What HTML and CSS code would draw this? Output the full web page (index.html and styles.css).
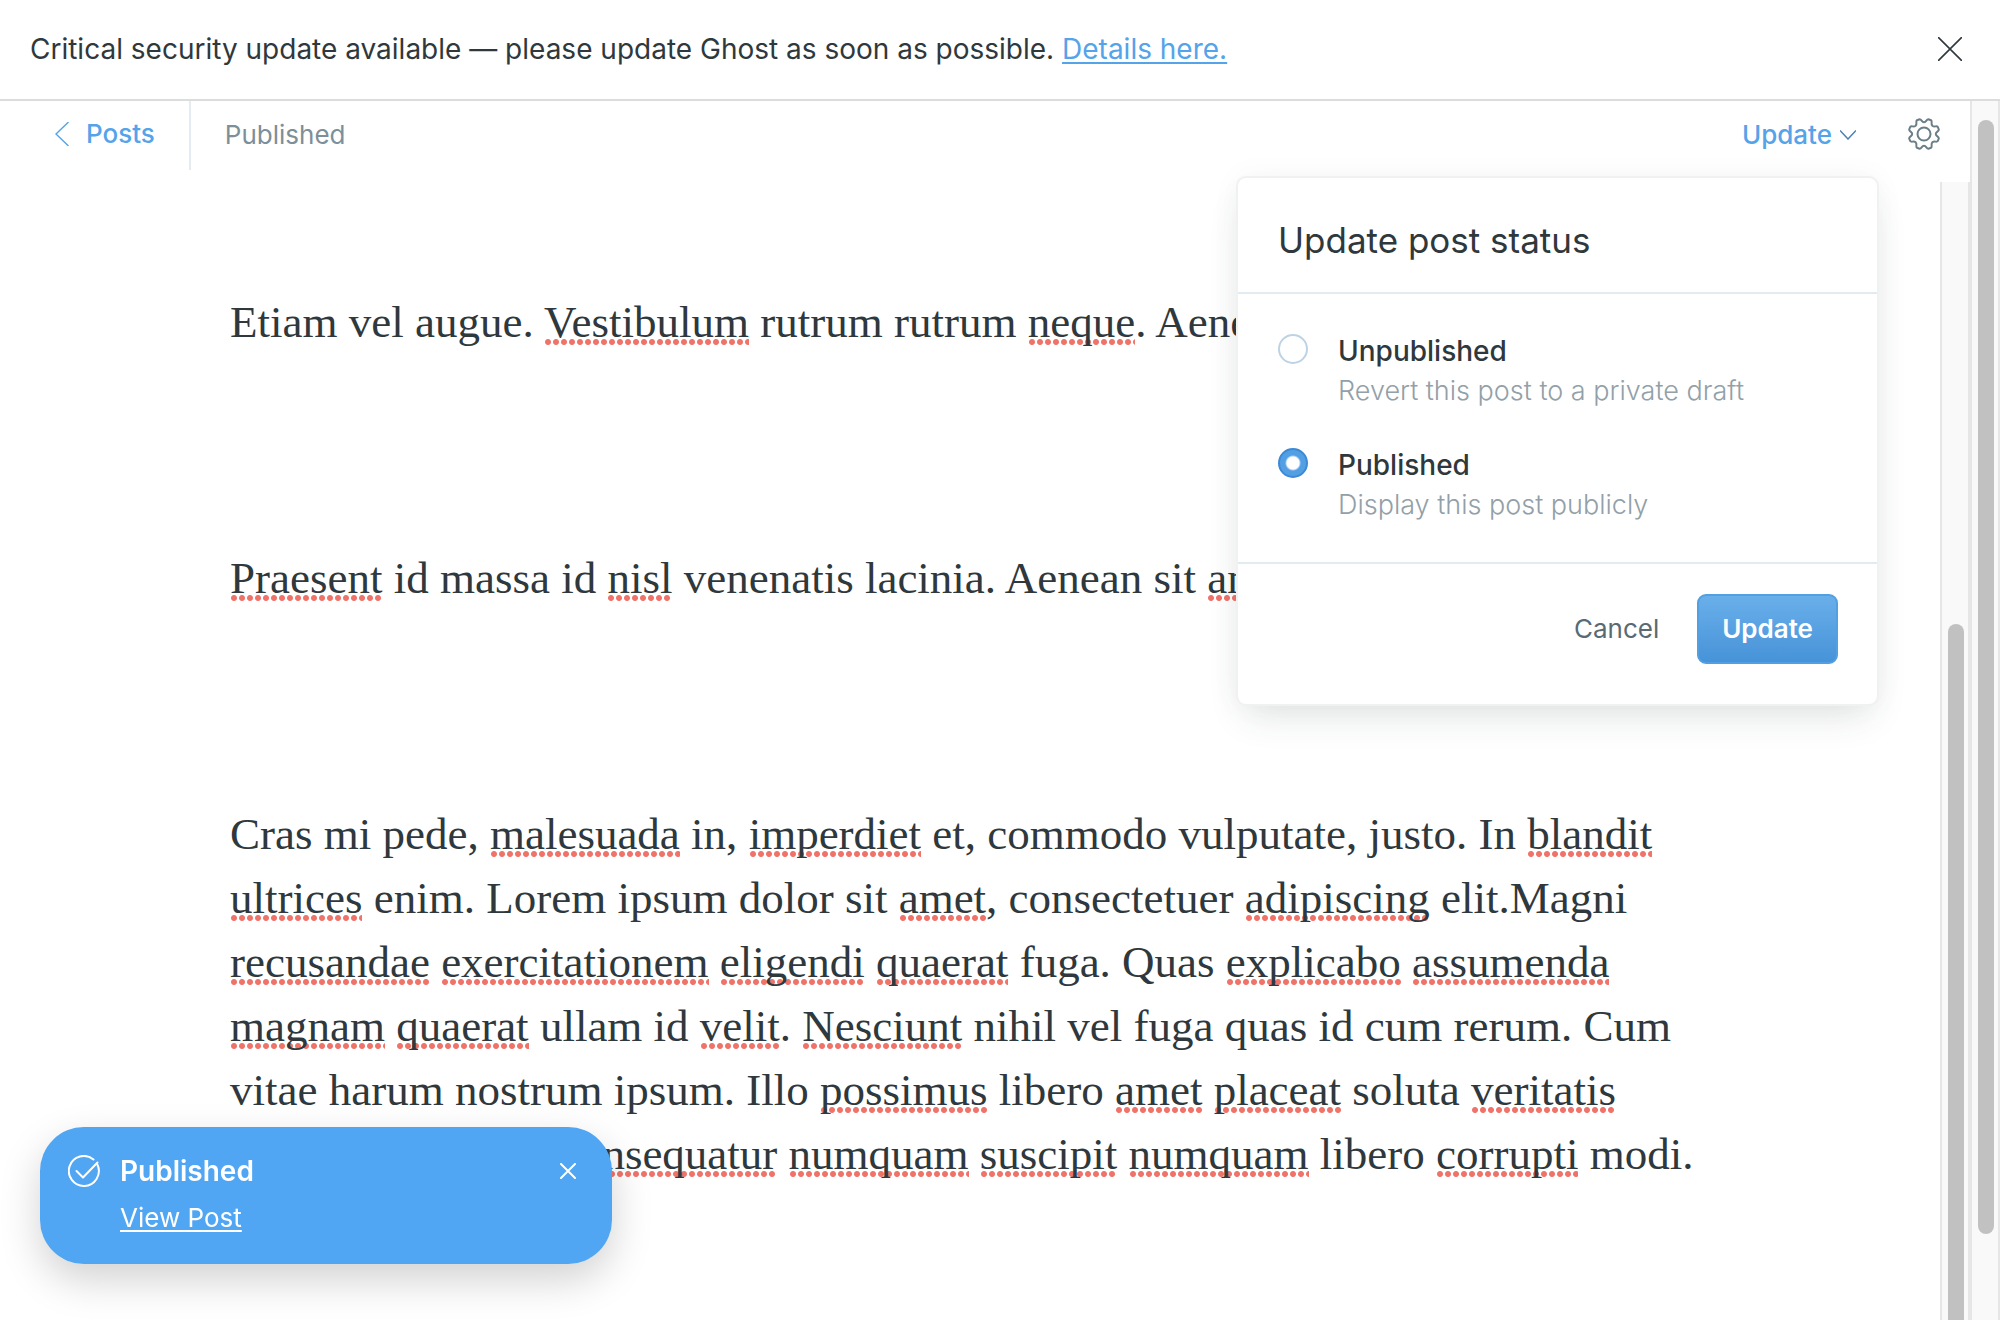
FILE: index.html
```html
<!DOCTYPE html>
<html lang="en">
<head>
<meta charset="utf-8">
<title>Editor</title>
<link rel="stylesheet" href="styles.css">
</head>
<body>
<div class="app">
  <aside class="alert">
    <p class="alert-text">Critical security update available — please update Ghost as soon as possible. <a href="#">Details here.</a></p>
    <button class="icon-button" type="button" aria-label="Dismiss">
      <svg width="24" height="24" viewBox="0 0 24 24" fill="none" stroke="currentColor" stroke-width="1.6"><path d="M0 0 24 24M24 0 0 24"/></svg>
    </button>
  </aside>
  <div class="viewport">
    <div class="editor">
      <header class="toolbar">
        <a class="back" href="#">
          <svg width="14" height="24" viewBox="0 0 14 24" fill="none" stroke="currentColor" stroke-width="1.4"><path d="M13.500 0 1 12 13.500 24"/></svg>
          Posts
        </a>
        <span class="status">Published</span>
        <button class="update-trigger" type="button" aria-expanded="true">
          Update
          <svg width="16" height="10" viewBox="0 0 16 10" fill="none" stroke="currentColor" stroke-width="1.5"><path d="M0 0.500 8 9 16 0.500"/></svg>
        </button>
        <button class="icon-button settings" type="button" aria-label="Settings">
          <svg width="32" height="32" viewBox="0 0 32 32" fill="none" stroke="currentColor" stroke-width="2"><circle cx="16" cy="16" r="6.500"/><path d="M16 4.200C18.500 4.200 18.300 1 20.500 1.200L23 2.200C24.700 3.300 22.500 5.500 24.300 7.700C26.500 9.500 28.700 7.300 29.800 9L30.800 11.500C31 13.700 27.800 13.500 27.800 16C27.800 18.500 31 18.300 30.800 20.500L29.800 23C28.700 24.700 26.500 22.500 24.300 24.300C22.500 26.500 24.700 28.700 23 29.800L20.500 30.800C18.300 31 18.500 27.800 16 27.800C13.500 27.800 13.700 31 11.500 30.800L9 29.800C7.300 28.700 9.500 26.500 7.700 24.300C5.500 22.500 3.300 24.700 2.200 23L1.200 20.500C1 18.300 4.200 18.500 4.200 16C4.200 13.500 1 13.700 1.200 11.500L2.200 9C3.300 7.300 5.500 9.500 7.700 7.700C9.500 5.500 7.300 3.300 9 2.200L11.500 1.200C13.700 1 13.500 4.200 16 4.200Z"/></svg>
        </button>
        <form class="popover">
          <h2 class="popover-title">Update post status</h2>
          <div class="options">
            <div class="option">
              <input type="radio" id="unpublished" name="status">
              <label for="unpublished">Unpublished<small>Revert this post to a private draft</small></label>
            </div>
            <div class="option">
              <input type="radio" id="published" name="status" checked>
              <label for="published">Published<small>Display this post publicly</small></label>
            </div>
          </div>
          <footer class="actions">
            <button class="cancel" type="button">Cancel</button>
            <button class="submit" type="button">Update</button>
          </footer>
        </form>
      </header>
      <div class="content">
        <article class="post">
          <p>Etiam vel augue. <u>Vestibulum</u> rutrum rutrum <u>neque</u>. Aenean</p>
          <p><u>Praesent</u> id massa id <u>nisl</u> venenatis lacinia. Aenean sit <u>amet</u></p>
          <p>Cras mi pede, <u>malesuada</u> in, <u>imperdiet</u> et, commodo vulputate, justo. In <u>blandit</u><br>
          <u>ultrices</u> enim. Lorem ipsum dolor sit <u>amet</u>, consectetuer <u>adipiscing</u> elit.Magni<br>
          <u>recusandae</u> <u>exercitationem</u> <u>eligendi</u> <u>quaerat</u> fuga. Quas <u>explicabo</u> <u>assumenda</u><br>
          <u>magnam</u> <u>quaerat</u> ullam id <u>velit</u>. <u>Nesciunt</u> nihil vel fuga quas id cum rerum. Cum<br>
          vitae harum nostrum ipsum. Illo <u>possimus</u> libero <u>amet</u> <u>placeat</u> soluta <u>veritatis</u><br>
          accusantium quas <u>consequatur</u> <u>numquam</u> <u>suscipit</u> <u>numquam</u> libero <u>corrupti</u> modi.</p>
        </article>
        <div class="scrollbar"><div class="thumb thumb-content"></div></div>
      </div>
    </div>
    <div class="scrollbar"><div class="thumb thumb-page"></div></div>
  </div>
  <section class="toast" role="status">
    <svg width="32" height="32" viewBox="0 0 32 32" fill="none" stroke="currentColor" stroke-width="2" stroke-linecap="round" stroke-linejoin="round"><path d="M25.500 4.500A15 15 0 1 0 29.600 10"/><path d="M8.500 16 15 22.500 29.500 7.500"/></svg>
    <div class="toast-body"><strong>Published</strong><a href="#">View Post</a></div>
    <button class="icon-button" type="button" aria-label="Close">
      <svg width="16" height="16" viewBox="0 0 16 16" fill="none" stroke="currentColor" stroke-width="2" stroke-linecap="round"><path d="M1 1 15 15M15 1 1 15"/></svg>
    </button>
  </section>
</div>
</body>
</html>
```
FILE: styles.css
```css
* { box-sizing: border-box; }
body {
  margin: 0;
  background: #fff;
  color: #2f383c;
  font: 400 26px/32px Inter, "Liberation Sans", sans-serif;
}
button { padding: 0; border: 0; background: none; color: inherit; font: inherit; }
h2, p { margin: 0; }
svg { display: block; flex: none; }

.app { display: flex; flex-direction: column; height: 100vh; overflow: hidden; }

.alert {
  display: flex;
  align-items: center;
  justify-content: space-between;
  padding: 31px 38px 32px 30px;
  border-bottom: 2px solid #dbdddd;
  font-size: 28px;
  line-height: 36px;
}
.alert a { color: #55a3e9; text-decoration-thickness: 2px; text-underline-offset: 3px; text-decoration-skip-ink: none; }

.viewport { display: flex; flex: 1; min-height: 0; }
.editor { display: flex; flex: 1; flex-direction: column; min-width: 0; }

.toolbar { position: relative; display: flex; align-items: flex-start; padding-right: 30px; height: 81px; }
.back {
  display: flex;
  align-items: center;
  gap: 17px;
  padding: 17px 34px 20px 55px;
  border-right: 2px solid #e5ecf1;
  color: #55a3e9;
  font-weight: 500;
  text-decoration: none;
}
.status { flex: 1; padding: 18px 34px; color: #7d8f99; }
.update-trigger { display: flex; align-items: center; gap: 8px; padding: 18px 0; color: #55a3e9; font-weight: 500; }
.update-trigger svg { color: #4b80b1; }
.settings { margin: 17px 0 0 52px; color: #6a7e88; }

.popover {
  position: absolute;
  z-index: 2;
  top: 75px;
  right: 91px;
  width: 643px;
  border: 2px solid #f0f1f1;
  border-radius: 10px;
  background: #fff;
  box-shadow: 0 18px 36px -10px rgba(40, 60, 60, .14), 0 0 30px rgba(40, 60, 60, .04);
}
.popover-title { padding: 41px 40px 31px; border-bottom: 2px solid #e2ebf2; font-size: 35px; font-weight: 400; line-height: 42px; }
.options { display: grid; gap: 34px; padding: 37px 40px; }
.option { display: flex; gap: 30px; }
.option input {
  appearance: none;
  flex: none;
  width: 30px;
  height: 30px;
  margin: 3px 0 0;
  border: 2px solid #bdd3e5;
  border-radius: 50%;
  background: #fff;
}
.option input:checked { border-color: #3d89d6; background: radial-gradient(circle, #fff 6px, #529fe3 8px); }
.option label { font-size: 28px; font-weight: 500; line-height: 40px; }
.option small { display: block; color: #92a0a8; font-size: 27px; font-weight: 300; line-height: 40px; }
.actions { display: flex; align-items: center; justify-content: flex-end; gap: 38px; padding: 30px 39px 40px; border-top: 2px solid #e2ebf2; }
.cancel { color: #5a6a73; }
.submit {
  padding: 17px 23px;
  border: 2px solid #529fe3;
  border-radius: 9px;
  background: linear-gradient(#69afea, #4793d8);
  color: #fff;
  font-weight: 600;
}

.content { display: flex; flex: 1; min-height: 0; }
.post {
  display: flex;
  flex: 1;
  flex-direction: column;
  gap: 192px;
  min-width: 0;
  padding: 108px 0 0 230px;
  font: 45px/64px "Liberation Serif", serif;
  white-space: nowrap;
}
.post u {
  background: radial-gradient(circle, #f0736a 2.5px, transparent 3.5px) 0 calc(100% - 2px) / 8px 6px repeat-x;
  text-decoration: none;
}

.scrollbar { flex: none; width: 30px; padding: 0 4px 0 6px; border: solid #e6e6e6; border-width: 0 2px; background: #f9f9f9; }
.thumb { width: 16px; border-radius: 8px; background: #c1c1c1; }
.thumb-page { height: 1114px; margin-top: 19px; }
.thumb-content { height: 900px; margin-top: 442px; }

.toast {
  position: fixed;
  z-index: 3;
  bottom: 56px;
  left: 40px;
  display: flex;
  align-items: flex-start;
  gap: 20px;
  width: 572px;
  padding: 28px 36px 28px 28px;
  border-radius: 44px;
  background: #50a6f2;
  box-shadow: 0 16px 40px rgba(0, 0, 0, .18);
  color: #fff;
}
.toast-body { display: grid; flex: 1; justify-items: start; gap: 13px; }
.toast strong { font-size: 28px; font-weight: 600; }
.toast a { color: inherit; line-height: 36px; text-decoration-thickness: 2px; text-underline-offset: 3px; text-decoration-skip-ink: none; }
.toast .icon-button { margin-top: 8px; }
```
